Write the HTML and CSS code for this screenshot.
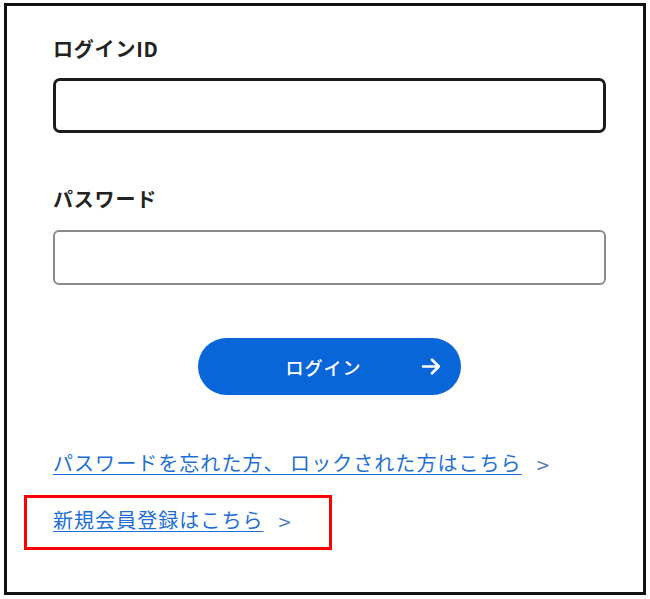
FILE: index.html
```html
<!DOCTYPE html>
<html lang="ja">
<head>
<meta charset="utf-8">
<title>ログイン</title>
<link rel="stylesheet" href="styles.css">
</head>
<body>
<div class="frame">
  <form class="login">
    <label class="label" for="loginid">ログインID</label>
    <input class="field field-focus" id="loginid" type="text">
    <label class="label label-pw" for="pw">パスワード</label>
    <input class="field" id="pw" type="password">
    <div class="btn-row">
      <button class="btn" type="button">
        <span class="btn-text">ログイン</span>
        <svg class="btn-arrow" viewBox="0 0 20 20" width="20" height="20" aria-hidden="true">
          <path d="M2 10 H17 M10.5 3.5 L17 10 L10.5 16.5" fill="none" stroke="#fff" stroke-width="2.6" stroke-linecap="round" stroke-linejoin="round"/>
        </svg>
      </button>
    </div>
    <div class="links">
      <div class="link-row"><a class="link" href="#">パスワードを忘れた方、 ロックされた方はこちら</a><span class="chev">&gt;</span></div>
      <div class="highlight">
        <div class="link-row"><a class="link" href="#">新規会員登録はこちら</a><span class="chev">&gt;</span></div>
      </div>
    </div>
  </form>
</div>
</body>
</html>
```
FILE: styles.css
```css
* { box-sizing: border-box; }
html, body { margin: 0; padding: 0; background: #fff; }
body {
  font-family: "Noto Sans CJK JP", "Noto Sans", "Liberation Sans", sans-serif;
  color: #222;
}
.frame {
  margin: 3px 4px 0 4px;
  width: 642px;
  height: 592px;
  border: 3px solid #111;
  padding: 29px 37px 0 46px;
}
.login {
  display: flex;
  flex-direction: column;
}
.label {
  font-size: 20px;
  font-weight: 700;
  line-height: 28px;
  height: 28px;
  margin-bottom: 15px;
  letter-spacing: 0.8px;
}
.label-pw { margin-top: 52px; margin-bottom: 17px; }
.field {
  width: 553px;
  height: 55px;
  border: 2px solid #8a8a8a;
  border-radius: 6px;
  background: #fff;
  font-size: 18px;
  padding: 0 12px;
  outline: none;
}
.field-focus {
  border: 3px solid #1c1c1c;
  border-radius: 7px;
}
.btn-row {
  width: 553px;
  display: flex;
  justify-content: center;
  margin-top: 53px;
}
.btn {
  position: relative;
  width: 263px;
  height: 57px;
  border: none;
  border-radius: 29px;
  background: #0866d8;
  color: #fff;
  font-family: inherit;
  font-size: 18px;
  font-weight: 500;
  display: flex;
  align-items: center;
  justify-content: center;
  padding: 0 12px 0 0;
  cursor: pointer;
}
.btn-text { letter-spacing: 1px; }
.btn-arrow {
  position: absolute;
  right: 19px;
  top: 18px;
  width: 21px;
  height: 21px;
}
.links {
  margin-top: 54px;
  display: flex;
  flex-direction: column;
}
.link-row {
  display: flex;
  align-items: baseline;
  font-size: 20px;
  line-height: 28px;
}
.link {
  color: #1e6fd5;
  text-decoration: underline;
  text-underline-offset: 3px;
  text-decoration-thickness: 1px;
  letter-spacing: 1.05px;
}
.chev {
  color: #5580b8;
  margin-left: 14px;
  font-size: 17px;
  font-family: "DejaVu Sans", sans-serif;
}
.highlight {
  margin-top: 16px;
  margin-left: -29px;
  width: 308px;
  height: 55px;
  border: 3px solid #f00;
  padding: 8px 0 0 26px;
}
```
